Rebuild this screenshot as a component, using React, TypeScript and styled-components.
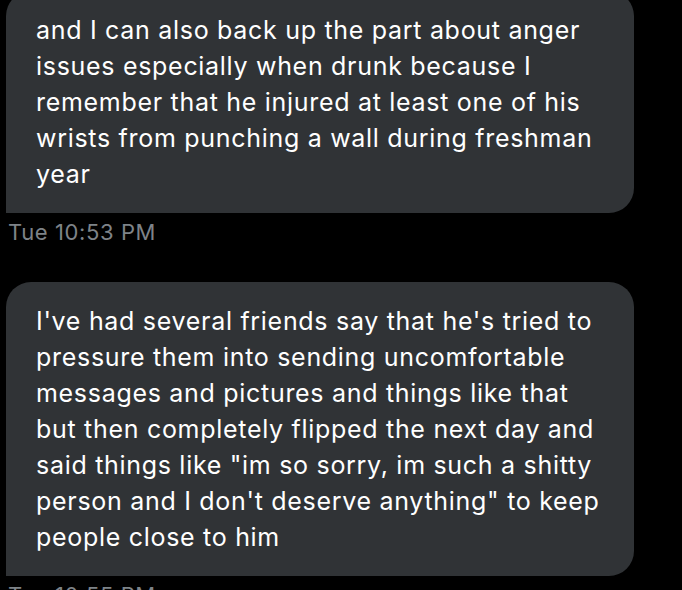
import React from "react";
import styled, { createGlobalStyle } from "styled-components";

const Global = createGlobalStyle`
  html, body { margin: 0; padding: 0; background: #000; }
  body { overflow: hidden; }
`;

const Thread = styled.div`
  display: flex;
  flex-direction: column;
  padding-left: 6px;
  margin-top: -9px;
  font-family: Inter, "Liberation Sans", Arial, sans-serif;
`;

const Bubble = styled.div`
  width: 628px;
  box-sizing: border-box;
  background: #303336;
  border-radius: 25px 25px 25px 0;
  padding: 21px 20px 21px 30px;
  color: #ffffff;
  font-size: 25px;
  line-height: 36px;
  letter-spacing: 0.7px;
`;

const Line = styled.span`
  display: block;
  white-space: nowrap;
`;

const Stamp = styled.div`
  height: 69px;
  box-sizing: border-box;
  padding: 6px 0 0 2px;
  color: #7e8388;
  font-size: 22px;
  line-height: 26px;
  letter-spacing: 0.6px;
`;

const messages = [
  {
    lines: [
      "and I can also back up the part about anger",
      "issues especially when drunk because I",
      "remember that he injured at least one of his",
      "wrists from punching a wall during freshman",
      "year",
    ],
    time: "Tue 10:53 PM",
  },
  {
    lines: [
      "I've had several friends say that he's tried to",
      "pressure them into sending uncomfortable",
      "messages and pictures and things like that",
      "but then completely flipped the next day and",
      'said things like "im so sorry, im such a shitty',
      "person and I don't deserve anything\" to keep",
      "people close to him",
    ],
    time: "Tue 10:55 PM",
  },
];

export default function App() {
  return (
    <>
      <Global />
      <Thread>
        {messages.map((m, i) => (
          <React.Fragment key={i}>
            <Bubble>
              {m.lines.map((l, j) => (
                <Line key={j}>{l}</Line>
              ))}
            </Bubble>
            <Stamp>{m.time}</Stamp>
          </React.Fragment>
        ))}
      </Thread>
    </>
  );
}
